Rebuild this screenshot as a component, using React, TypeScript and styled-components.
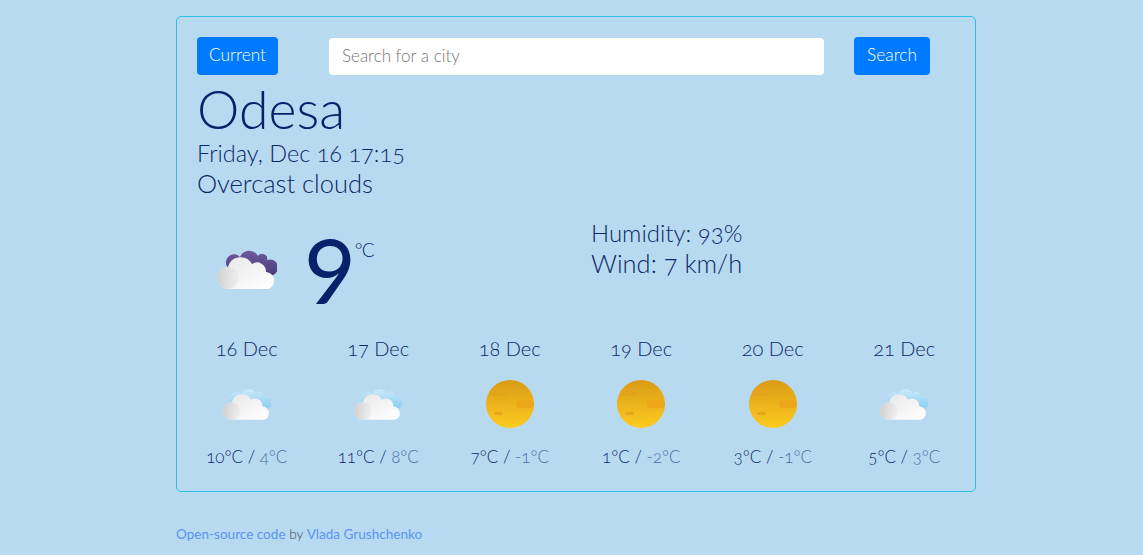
import React from "react";
import styled, { createGlobalStyle } from "styled-components";

const Global = createGlobalStyle`
  html, body { margin: 0; padding: 0; background: #b8daf1; }
  body { font-family: Lato, "Noto Sans", sans-serif; font-weight: 300; font-variant-numeric: oldstyle-nums; }
  * { box-sizing: border-box; }
`;

const Page = styled.div`
  width: 800px;
  margin-left: 176px;
  padding-top: 16px;
  height: 555px;
`;
const Card = styled.main`
  height: 476px;
  border: 1px solid #2fbfe2;
  border-radius: 5px;
  padding: 20px 20px 0;
`;
const Toolbar = styled.div`
  display: flex;
  align-items: center;
  height: 38px;
`;
const Button = styled.button<{ $w: number; $ml?: number }>`
  width: ${(p) => p.$w}px;
  margin-left: ${(p) => p.$ml ?? 0}px;
  height: 38px;
  padding: 0 0 3px;
  border: 0;
  border-radius: 4px;
  background: #007bff;
  color: #fff;
  font: 300 17.3px Lato, sans-serif;
`;
const CityInput = styled.input`
  width: 495px;
  height: 37px;
  margin: 1px 0 0 51px;
  border: 0;
  border-radius: 4px;
  background: #fff;
  padding: 0 13px 2px;
  font: 300 17px Lato, sans-serif;
  color: #333;
  &::placeholder { color: #777; opacity: 1; }
`;
const City = styled.h1`
  margin: 3px 0 0;
  font-size: 53.6px;
  line-height: 60px;
  font-weight: 300;
  color: #05226b;
`;
const Sub = styled.div<{ $size: number }>`
  font-size: ${(p) => p.$size}px;
  line-height: 30px;
  color: #0c2866;
`;
const Now = styled.section`
  display: flex;
  margin-top: 20px;
  height: 110px;
`;
const NowIconBox = styled.div`
  flex: 0 0 107px;
  padding: 30px 0 0 20px;
`;
const Temp = styled.div`
  display: flex;
  align-items: flex-start;
  flex: 0 0 287px;
  color: #05226b;
`;
const Big = styled.span`
  font-size: 96px;
  line-height: 92px;
  font-weight: 400;
  margin-top: -7px;
`;
const Unit = styled.span`
  font-size: 19px;
  line-height: 22px;
  letter-spacing: -1px;
  margin-top: 21px;
  margin-left: -1px;
  color: #0c2866;
`;
const Stats = styled.div`
  line-height: 30px;
  color: #0c2866;
`;
const Stat = styled.div<{ $size: number }>`
  font-size: ${(p) => p.$size}px;
`;
const Forecast = styled.section`
  display: grid;
  grid-template-columns: repeat(6, 131.5px);
  margin: 8px -16px 0;
`;
const Day = styled.div`
  display: flex;
  flex-direction: column;
  align-items: center;
`;
const DayName = styled.div`
  font-size: 20px;
  line-height: 24px;
  color: #0c2866;
`;
const DayIcon = styled.div`
  height: 48px;
  margin: 20px 0 18px;
  display: flex;
  align-items: center;
`;
const Range = styled.div`
  font-size: 17px;
  line-height: 22px;
  color: #0c2866;
`;
const Low = styled.span`
  color: #4d6c9f;
`;
const Footer = styled.footer`
  margin-top: 34px;
  font-size: 13.55px;
  line-height: 16px;
  color: #3e4852;
  font-weight: 300;
`;
const A = styled.a`
  color: #5a94f2;
  text-decoration: none;
  font-weight: 400;
`;

function Cloud({ id, w, back }: { id: string; w: number; back: "dark" | "light" }) {
  const h = (w * 42) / 60;
  const isDark = back === "dark";
  return (
    <svg width={w} height={h} viewBox="0 0 60 42" aria-hidden="true">
      <defs>
        <linearGradient id={`${id}b`} x1="0" y1="0" x2="0" y2="1">
          <stop offset="0" stopColor={isDark ? "#6f5a9e" : "#cdeafa"} />
          <stop offset="1" stopColor={isDark ? "#453a72" : "#7fc9ef"} />
        </linearGradient>
        <linearGradient id={`${id}w`} x1="0" y1="0" x2="0.9" y2="1">
          <stop offset="0" stopColor="#e6e6e6" />
          <stop offset="0.6" stopColor="#f5f5f5" />
          <stop offset="1" stopColor="#ffffff" />
        </linearGradient>
        <linearGradient id={`${id}l`} x1="0" y1="0" x2="1" y2="0">
          <stop offset="0" stopColor="#cfcfcf" />
          <stop offset="1" stopColor="#dedede" stopOpacity="0.25" />
        </linearGradient>
      </defs>
      <path
        fill={`url(#${id}b)`}
        d="M11 20A8 8 0 0 1 23 9A10 10 0 0 1 41 8A5 5 0 0 1 50 12A7.5 7.5 0 0 1 56 27L30 30Z"
      />
      <path
        fill={`url(#${id}w)`}
        d="M11 41a11 11 0 0 1 0-22A13 13 0 0 1 35 16A9 9 0 0 1 49 24A8.7 8.7 0 0 1 51 41Z"
      />
      <path fill={`url(#${id}l)`} d="M11 41a11 11 0 0 1 0-22a11 11 0 0 1 0 22z" />
    </svg>
  );
}

function Sun({ id }: { id: string }) {
  return (
    <svg width="48" height="48" viewBox="0 0 48 48" aria-hidden="true">
      <defs>
        <linearGradient id={id} x1="0" y1="0" x2="0" y2="1">
          <stop offset="0" stopColor="#da9b15" />
          <stop offset="1" stopColor="#fdcc20" />
        </linearGradient>
        <clipPath id={`${id}c`}>
          <circle cx="24" cy="24" r="24" />
        </clipPath>
      </defs>
      <circle cx="24" cy="24" r="24" fill={`url(#${id})`} />
      <g clipPath={`url(#${id}c)`}>
        <rect x="3" y="8" width="17" height="8" rx="3" fill="#e3a31b" />
        <rect x="30" y="20" width="18" height="8" rx="3" fill="#eba617" />
        <rect x="8" y="32" width="9" height="3" rx="1.5" fill="#e9a51e" />
      </g>
    </svg>
  );
}

const days: { d: string; hi: string; lo: string; icon: "cloud" | "sun" }[] = [
  { d: "16 Dec", hi: "10", lo: "4", icon: "cloud" },
  { d: "17 Dec", hi: "11", lo: "8", icon: "cloud" },
  { d: "18 Dec", hi: "7", lo: "-1", icon: "sun" },
  { d: "19 Dec", hi: "1", lo: "-2", icon: "sun" },
  { d: "20 Dec", hi: "3", lo: "-1", icon: "sun" },
  { d: "21 Dec", hi: "5", lo: "3", icon: "cloud" },
];

export default function App() {
  return (
    <>
      <Global />
      <Page>
        <Card>
          <Toolbar>
            <Button $w={81}>Current</Button>
            <CityInput placeholder="Search for a city" />
            <Button $w={76} $ml={30}>Search</Button>
          </Toolbar>
          <City>Odesa</City>
          <Sub $size={23.5}>Friday, Dec 16 17:15</Sub>
          <Sub $size={25.5}>Overcast clouds</Sub>
          <Now>
            <NowIconBox>
              <Cloud id="main" w={60} back="dark" />
            </NowIconBox>
            <Temp>
              <Big>9</Big>
              <Unit>°C</Unit>
            </Temp>
            <Stats>
              <Stat $size={24}>Humidity: 93%</Stat>
              <Stat $size={25.5}>Wind: 7 km/h</Stat>
            </Stats>
          </Now>
          <Forecast>
            {days.map((x, i) => (
              <Day key={x.d}>
                <DayName>{x.d}</DayName>
                <DayIcon>
                  {x.icon === "sun" ? <Sun id={`s${i}`} /> : <Cloud id={`c${i}`} w={48} back="light" />}
                </DayIcon>
                <Range>
                  {x.hi}°C / <Low>{x.lo}°C</Low>
                </Range>
              </Day>
            ))}
          </Forecast>
        </Card>
        <Footer>
          <A href="#">Open-source code</A> by <A href="#">Vlada Grushchenko</A>
        </Footer>
      </Page>
    </>
  );
}
